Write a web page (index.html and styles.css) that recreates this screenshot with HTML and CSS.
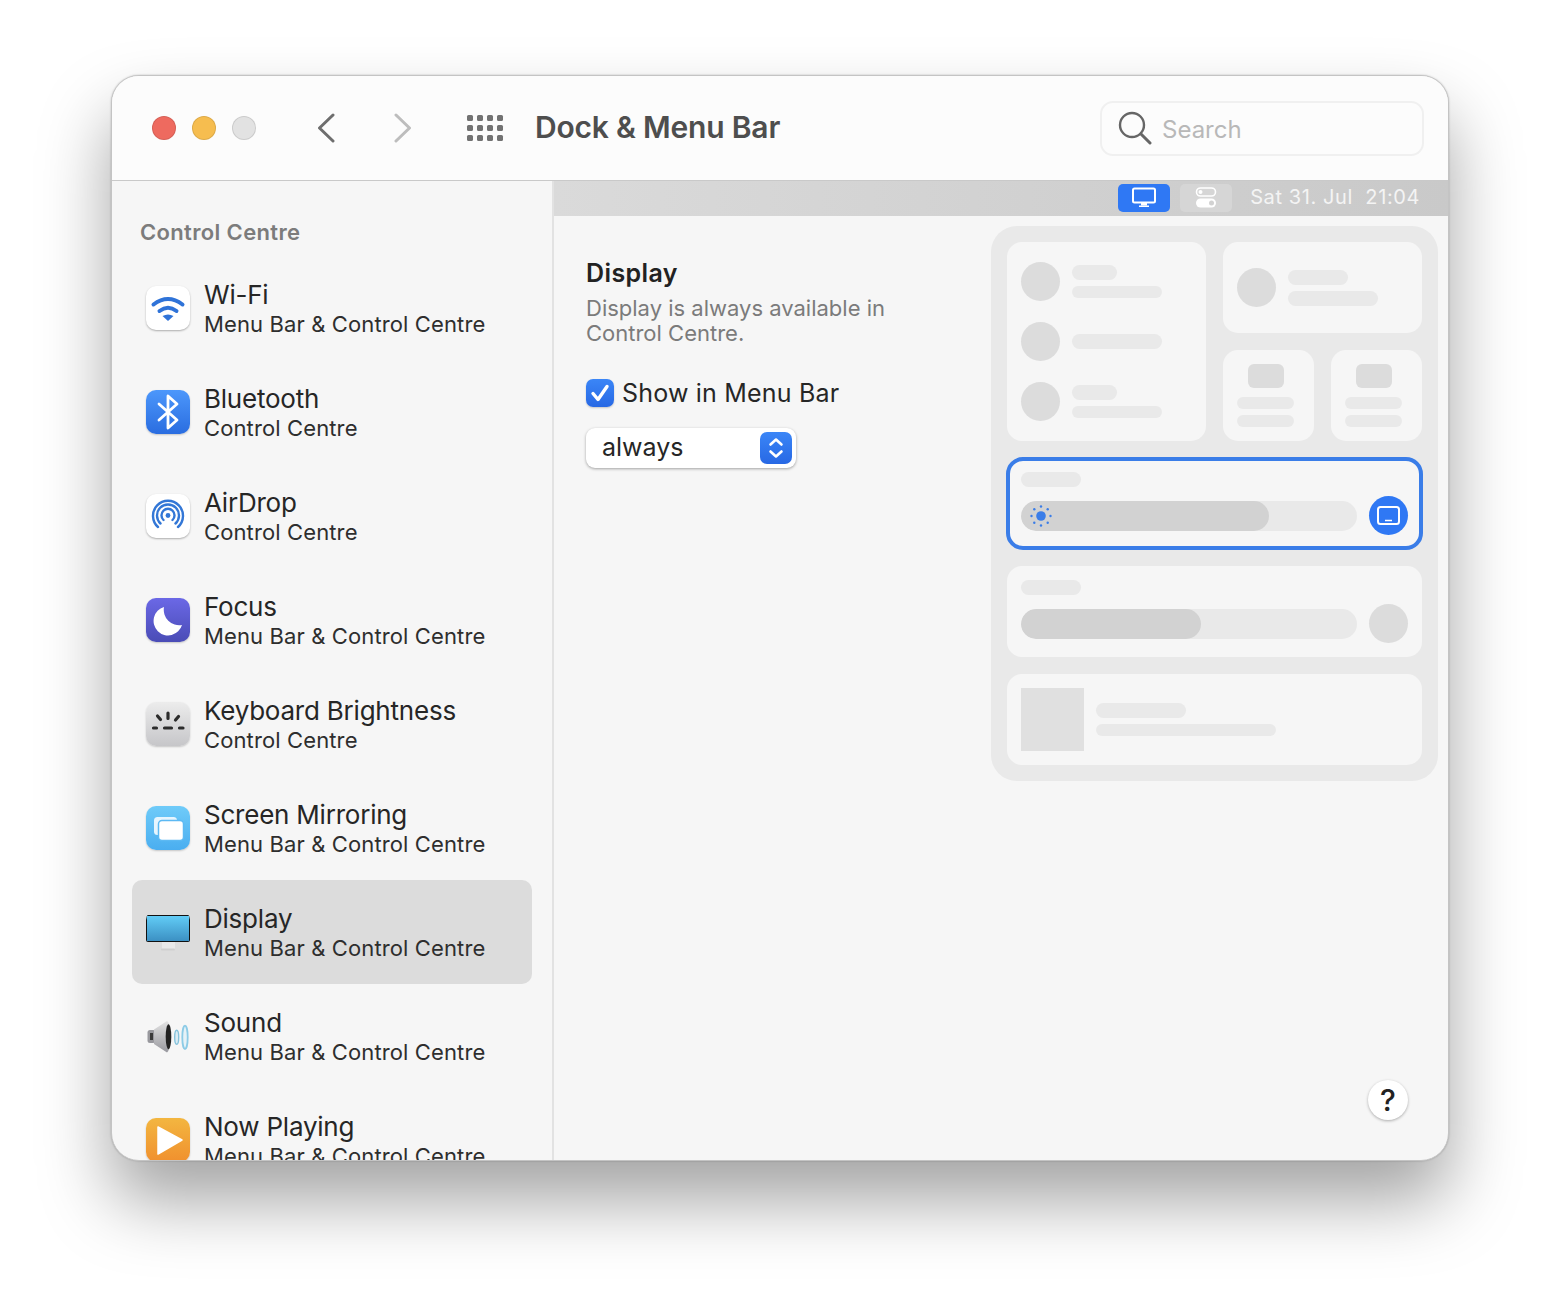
FILE: index.html
```html
<!DOCTYPE html>
<html lang="en">
<head>
    <meta charset="UTF-8">
    <meta name="viewport" content="width=device-width, initial-scale=1.0">
    <title>Dock &amp; Menu Bar</title>
    <link rel="stylesheet" href="styles.css">
</head>
<body>
<div class="window">
    <!-- title bar -->
    <header class="titlebar">
        <div class="lights">
            <span class="light red"></span>
            <span class="light yellow"></span>
            <span class="light grey"></span>
        </div>
        <svg class="chev" width="18" height="30" viewBox="0 0 18 30"><path d="M16 2 L2.500 15 L16 28" fill="none" stroke="#6e6e6e" stroke-width="3" stroke-linecap="round" stroke-linejoin="round"/></svg>
        <svg class="chev next" width="18" height="30" viewBox="0 0 18 30"><path d="M2 2 L15.500 15 L2 28" fill="none" stroke="#bdbdbd" stroke-width="3" stroke-linecap="round" stroke-linejoin="round"/></svg>
        <div class="apps">
            <i></i><i></i><i></i><i></i>
            <i></i><i></i><i></i><i></i>
            <i></i><i></i><i></i><i></i>
        </div>
        <h1 class="title">Dock &amp; Menu Bar</h1>
        <div class="search">
            <svg width="34" height="34" viewBox="0 0 34 34"><circle cx="14" cy="14" r="12" fill="none" stroke="#666" stroke-width="2.400"/><path d="M23 23 L32 32" stroke="#666" stroke-width="3" stroke-linecap="round"/></svg>
            <span class="search-text">Search</span>
        </div>
    </header>

    <div class="body">
        <!-- left list -->
        <aside class="sidebar">
            <div class="side-head">Control Centre</div>

            <div class="item">
                <div class="tile white">
                    <svg viewBox="0 0 44 44"><path d="M7.500 18.500 Q22 7.500 36.500 18.500" fill="none" stroke="#2f73d8" stroke-width="4" stroke-linecap="round"/><path d="M13.500 25 Q22 18.500 30.500 25" fill="none" stroke="#2f73d8" stroke-width="4" stroke-linecap="round"/><path d="M16.500 30 Q22 27 27.500 30 L22 35 Z" fill="#2f73d8"/></svg>
                </div>
                <div class="txt"><div class="name">Wi-Fi</div><div class="sub">Menu Bar &amp; Control Centre</div></div>
            </div>

            <div class="item">
                <div class="tile blue">
                    <svg viewBox="0 0 44 44"><path d="M13 14 L31 30 L22 38 L22 6 L31 14 L13 30" fill="none" stroke="#fff" stroke-width="2.800" stroke-linejoin="round" stroke-linecap="round"/></svg>
                </div>
                <div class="txt"><div class="name">Bluetooth</div><div class="sub">Control Centre</div></div>
            </div>

            <div class="item">
                <div class="tile white">
                    <svg viewBox="0 0 44 44" fill="none" stroke="#3377d6"><path d="M12 33 A15 15 0 1 1 32 33" stroke-width="2.400" stroke-linecap="round"/><path d="M14.500 29.500 A11 11 0 1 1 29.500 29.500" stroke-width="2.400" stroke-linecap="round"/><path d="M17.500 26 A6.500 6.500 0 1 1 26.500 26" stroke-width="2.400" stroke-linecap="round"/><circle cx="22" cy="21.500" r="2.400" fill="#3377d6" stroke="none"/></svg>
                </div>
                <div class="txt"><div class="name">AirDrop</div><div class="sub">Control Centre</div></div>
            </div>

            <div class="item">
                <div class="tile purple">
                    <svg viewBox="0 0 44 44"><path d="M18 9 A14.500 14.500 0 1 0 36 27 A15.500 15.500 0 0 1 18 9 Z" fill="#fff"/></svg>
                </div>
                <div class="txt"><div class="name">Focus</div><div class="sub">Menu Bar &amp; Control Centre</div></div>
            </div>

            <div class="item">
                <div class="tile silver">
                    <svg viewBox="0 0 44 44" stroke="#2c2c2c" stroke-width="3.200" stroke-linecap="round"><path d="M7.500 26 H10.500 M18.500 26 H25.500 M33.500 26 H37 M22 11 V16.500 M11.500 14 L14.500 17.500 M32.500 14.500 L29.500 18"/></svg>
                </div>
                <div class="txt"><div class="name">Keyboard Brightness</div><div class="sub">Control Centre</div></div>
            </div>

            <div class="item">
                <div class="tile sky">
                    <svg viewBox="0 0 44 44"><rect x="8" y="11" width="23" height="18" rx="3.500" fill="#e6f5fe"/><rect x="12.500" y="14.500" width="25" height="20" rx="3.500" fill="#fff" stroke="#5cb9f3" stroke-width="1.500"/></svg>
                </div>
                <div class="txt"><div class="name">Screen Mirroring</div><div class="sub">Menu Bar &amp; Control Centre</div></div>
            </div>

            <div class="item active">
                <div class="tile plain">
                    <svg viewBox="0 0 44 44"><defs><linearGradient id="scr" x1="0" y1="0" x2="0" y2="1"><stop offset="0" stop-color="#62cdf7"/><stop offset="1" stop-color="#3b8fc2"/></linearGradient></defs><rect x="16" y="31" width="13" height="9" fill="#e9e9e9"/><rect x="15" y="38.500" width="14" height="2" rx="1" fill="#cfcfcf"/><rect x="0.500" y="5.500" width="43" height="26" rx="1" fill="url(#scr)" stroke="#111"/></svg>
                </div>
                <div class="txt"><div class="name">Display</div><div class="sub">Menu Bar &amp; Control Centre</div></div>
            </div>

            <div class="item">
                <div class="tile plain">
                    <svg viewBox="0 0 44 44"><defs><linearGradient id="cone" x1="0" y1="0" x2="0" y2="1"><stop offset="0" stop-color="#e4e4e4"/><stop offset="1" stop-color="#98989e"/></linearGradient></defs><rect x="1.500" y="16" width="8" height="13" rx="2.500" fill="#98989d"/><rect x="4" y="19" width="3" height="7" fill="#3a3a3a"/><path d="M8 15.500 L21 7 Q24 8 24 22 Q24 37 21 38.500 L8 30 Z" fill="url(#cone)"/><ellipse cx="22.500" cy="22.700" rx="2.800" ry="12.500" fill="#222"/><ellipse cx="30.700" cy="23.300" rx="2" ry="7" fill="#dcedf5" stroke="#84c2dc" stroke-width="1.400"/><ellipse cx="39" cy="23.300" rx="2.700" ry="11.700" fill="#e6f2f7" stroke="#8ccbe6" stroke-width="1.800"/></svg>
                </div>
                <div class="txt"><div class="name">Sound</div><div class="sub">Menu Bar &amp; Control Centre</div></div>
            </div>

            <div class="item">
                <div class="tile orange">
                    <svg viewBox="0 0 44 44"><path d="M12 9 L36 22 L12 36 Z" fill="#fff" stroke="#fff" stroke-width="1.500" stroke-linejoin="round"/></svg>
                </div>
                <div class="txt"><div class="name">Now Playing</div><div class="sub">Menu Bar &amp; Control Centre</div></div>
            </div>
        </aside>

        <!-- right side -->
        <main class="main">
            <div class="menubar">
                <span class="mb-btn on">
                    <svg width="26" height="22" viewBox="0 0 26 22"><rect x="2" y="1.500" width="22" height="14" rx="1.500" fill="none" stroke="#fff" stroke-width="2"/><rect x="10" y="15.500" width="6" height="3" fill="#fff"/><rect x="8" y="18.500" width="10" height="1.500" fill="#fff"/></svg>
                </span>
                <span class="mb-btn off">
                    <svg width="22" height="22" viewBox="0 0 22 22"><rect x="1.500" y="1" width="19" height="8" rx="4" fill="none" stroke="#fff" stroke-width="1.600"/><circle cx="5.500" cy="5" r="2" fill="#fff"/><rect x="1" y="11.500" width="20" height="9" rx="4.500" fill="#fff"/><circle cx="16.500" cy="16" r="2.500" fill="#d2d2d2"/></svg>
                </span>
                <span class="clock">Sat 31. Jul&nbsp; 21:04</span>
            </div>

            <div class="content">
                <section class="opts">
                    <h2 class="opt-title">Display</h2>
                    <p class="opt-desc">Display is always available in Control Centre.</p>
                    <div class="check-row">
                        <span class="check">
                            <svg width="28" height="28" viewBox="0 0 28 28"><path d="M7 14.500 L12 20.500 L21 7.500" fill="none" stroke="#fff" stroke-width="3.400" stroke-linecap="round" stroke-linejoin="round"/></svg>
                        </span>
                        <span class="check-label">Show in Menu Bar</span>
                    </div>
                    <div class="select">
                        <span class="select-text">always</span>
                        <span class="stepper">
                            <svg width="32" height="32" viewBox="0 0 32 32"><path d="M10.500 12.500 L16 7.500 L21.500 12.500 M10.500 19.500 L16 24.500 L21.500 19.500" fill="none" stroke="#fff" stroke-width="2.600" stroke-linecap="round" stroke-linejoin="round"/></svg>
                        </span>
                    </div>
                </section>

                <section class="preview">
                    <div class="top-cards">
                        <div class="card net">
                            <div class="net-row">
                                <span class="dot"></span>
                                <div class="pills"><span class="pill w45"></span><span class="pill thin w90"></span></div>
                            </div>
                            <div class="net-row">
                                <span class="dot"></span>
                                <div class="pills"><span class="pill w90"></span></div>
                            </div>
                            <div class="net-row">
                                <span class="dot"></span>
                                <div class="pills"><span class="pill w45"></span><span class="pill thin w90"></span></div>
                            </div>
                        </div>
                        <div class="side-cards">
                            <div class="card wide">
                                <span class="dot"></span>
                                <div class="pills"><span class="pill w60"></span><span class="pill w90"></span></div>
                            </div>
                            <div class="small-row">
                                <div class="card small"><span class="sq"></span><span class="pill thin w57"></span><span class="pill thin w57"></span></div>
                                <div class="card small"><span class="sq"></span><span class="pill thin w57"></span><span class="pill thin w57"></span></div>
                            </div>
                        </div>
                    </div>

                    <div class="card slider-card picked">
                        <span class="pill w60"></span>
                        <div class="slider-row">
                            <div class="slider">
                                <div class="fill" style="width: 248px">
                                    <svg width="22" height="22" viewBox="0 0 22 22"><circle cx="11" cy="11" r="4.800" fill="#3a7de8"/><g fill="#3a7de8"><circle cx="11" cy="1.500" r="1.200"/><circle cx="11" cy="20.500" r="1.200"/><circle cx="1.500" cy="11" r="1.200"/><circle cx="20.500" cy="11" r="1.200"/><circle cx="4.300" cy="4.300" r="1.200"/><circle cx="17.700" cy="4.300" r="1.200"/><circle cx="4.300" cy="17.700" r="1.200"/><circle cx="17.700" cy="17.700" r="1.200"/></g></svg>
                                </div>
                            </div>
                            <span class="dot on">
                                <svg width="25" height="21" viewBox="0 0 25 21"><rect x="2" y="2" width="21" height="17" rx="2.500" fill="none" stroke="#fff" stroke-width="2"/><path d="M9 15.500 H16" stroke="#fff" stroke-width="1.500"/></svg>
                            </span>
                        </div>
                    </div>

                    <div class="card slider-card">
                        <span class="pill w60"></span>
                        <div class="slider-row">
                            <div class="slider"><div class="fill" style="width: 180px"></div></div>
                            <span class="dot"></span>
                        </div>
                    </div>

                    <div class="card playing">
                        <span class="art"></span>
                        <div class="pills"><span class="pill w90"></span><span class="pill thin w180"></span></div>
                    </div>
                </section>
            </div>
            <button class="help">?</button>
        </main>
    </div>
</div>
</body>
</html>
```

FILE: styles.css
```css
*{
    box-sizing: border-box;
}
html,body{
    margin: 0;
    height: 100%;
    background: #fff;
    overflow: hidden;
}
body{
    padding: 75px 111px 0;
    font-family: Inter, "Liberation Sans", sans-serif;
    color: #262626;
}
.window{
    width: 1338px;
    height: 1086px;
    background: #f6f6f6;
    border: 1px solid #c4c4c4;
    border-radius: 28px;
    overflow: hidden;
    box-shadow: 0 40px 70px rgba(0,0,0,.36), 0 0 2px rgba(0,0,0,.25);
    display: flex;
    flex-direction: column;
}

/* title bar */
.titlebar{
    height: 105px;
    flex: none;
    background: #fcfcfc;
    border-bottom: 1px solid #c9c9c9;
    display: flex;
    align-items: center;
    padding: 0 24px 0 40px;
}
.lights{
    display: flex;
    gap: 16px;
}
.light{
    width: 24px;
    height: 24px;
    border-radius: 50%;
    border: 1px solid rgba(0,0,0,.1);
}
.red{ background: #ee6a5f; }
.yellow{ background: #f6bd4f; }
.grey{ background: #e2e2e2; }
.chev{
    margin-left: 61px;
}
.chev.next{
    margin-left: 59px;
}
.apps{
    display: grid;
    grid-template-columns: repeat(4, 6px);
    grid-template-rows: repeat(3, 6px);
    gap: 4px;
    margin-left: 55px;
}
.apps i{
    background: #727272;
    border-radius: 1.500px;
}
.title{
    margin: 0 0 0 32px;
    padding-bottom: 2px;
    font-size: 30px;
    font-weight: 600;
    color: #4e4e4e;
    letter-spacing: -0.2px;
}
.search{
    margin-left: auto;
    width: 324px;
    height: 55px;
    border: 2px solid #f0f0f0;
    border-radius: 13px;
    display: flex;
    align-items: center;
    gap: 10px;
    padding-left: 16px;
    font-size: 24px;
    color: #b8b8b8;
}
.search-text{
    padding-top: 2px;
}

/* left list */
.body{
    flex: 1;
    display: flex;
    min-height: 0;
}
.sidebar{
    width: 442px;
    flex: none;
    border-right: 2px solid #e2e2e2;
    padding: 0 20px;
    overflow: hidden;
}
.side-head{
    height: 75px;
    padding: 38px 0 0 8px;
    font-size: 22px;
    font-weight: 600;
    color: #7c7c7c;
    line-height: 26px;
    letter-spacing: .35px;
}
.item{
    height: 104px;
    border-radius: 10px;
    display: flex;
    align-items: center;
    gap: 14px;
    padding-left: 14px;
}
.item.active{
    background: #dcdcdc;
}
.tile{
    width: 44px;
    height: 44px;
    flex: none;
    border-radius: 10px;
    overflow: hidden;
}
.tile svg{
    display: block;
    width: 44px;
    height: 44px;
}
.tile.white{
    background: #fff;
    box-shadow: 0 1px 2px rgba(0,0,0,.3);
}
.tile.blue{
    background: linear-gradient(#4c97fb, #2a6de0);
    box-shadow: 0 1px 2px rgba(0,0,0,.2);
}
.tile.purple{
    background: linear-gradient(#6b68e6, #4a4cb6);
    box-shadow: 0 1px 2px rgba(0,0,0,.2);
}
.tile.silver{
    background: linear-gradient(#ececec, #c6c6c9);
    box-shadow: 0 1px 2px rgba(0,0,0,.2);
}
.tile.sky{
    background: linear-gradient(#6fcbf9, #4aaef0);
    box-shadow: 0 1px 2px rgba(0,0,0,.2);
}
.tile.orange{
    background: linear-gradient(#f3b640, #f0902e);
    box-shadow: 0 1px 2px rgba(0,0,0,.2);
}
.txt{
    padding-top: 3px;
}
.name{
    font-size: 26px;
    line-height: 30px;
    letter-spacing: -0.22px;
    color: #262626;
}
.sub{
    font-size: 22px;
    line-height: 29px;
    letter-spacing: .12px;
    color: #2e2e2e;
}

/* right side */
.main{
    flex: 1;
    position: relative;
    min-width: 0;
    display: flex;
    flex-direction: column;
}
.menubar{
    height: 35px;
    flex: none;
    background: linear-gradient(90deg, #dadada, #c9c9c9);
    display: flex;
    align-items: center;
    justify-content: flex-end;
    padding: 0 28px 1px 0;
}
.mb-btn{
    width: 52px;
    height: 28px;
    border-radius: 5px;
    display: flex;
    align-items: center;
    justify-content: center;
    margin-right: 10px;
}
.mb-btn.on{
    background: #2f78f4;
}
.mb-btn.off{
    background: #d6d6d6;
}
.clock{
    margin-left: 8px;
    color: #f4f4f4;
    font-size: 20px;
    letter-spacing: .6px;
    padding-bottom: 3px;
}
.content{
    flex: 1;
    display: flex;
    justify-content: space-between;
    padding: 10px 10px 0 32px;
}
.opts{
    width: 330px;
}
.opt-title{
    margin: 29px 0 0;
    font-size: 25px;
    line-height: 36px;
    font-weight: 600;
    letter-spacing: .4px;
    color: #222;
}
.opt-desc{
    margin: 5px 0 0;
    font-size: 22px;
    line-height: 25px;
    color: #7b7b7b;
}
.check-row{
    display: flex;
    align-items: center;
    gap: 8px;
    margin-top: 32px;
}
.check{
    width: 28px;
    height: 28px;
    border-radius: 7px;
    background: linear-gradient(#3b86f7, #2768e4);
    box-shadow: 0 1px 2px rgba(0,0,0,.2);
}
.check svg{
    display: block;
}
.check-label{
    font-size: 25px;
    letter-spacing: .2px;
    color: #262626;
}
.select{
    width: 210px;
    height: 40px;
    margin-top: 20px;
    border-radius: 9px;
    background: #fff;
    box-shadow: 0 1px 3px rgba(0,0,0,.35);
    display: flex;
    align-items: center;
    justify-content: space-between;
    padding: 0 4px 0 16px;
    font-size: 25px;
}
.select-text{
    padding-bottom: 2px;
}
.stepper{
    width: 32px;
    height: 32px;
    border-radius: 7px;
    background: linear-gradient(#3b86f7, #2768e4);
}
.stepper svg{
    display: block;
}

/* preview of control centre */
.preview{
    width: 447px;
    height: 555px;
    background: #e9e9e9;
    border-radius: 26px;
    padding: 16px;
    display: flex;
    flex-direction: column;
    gap: 17px;
}
.card{
    background: #f6f6f6;
    border-radius: 15px;
}
.top-cards{
    display: flex;
    gap: 17px;
}
.net{
    width: 199px;
    height: 199px;
    padding: 20px 14px;
    display: flex;
    flex-direction: column;
    gap: 21px;
}
.net-row{
    display: flex;
    align-items: center;
    gap: 12px;
}
.side-cards{
    width: 199px;
    display: flex;
    flex-direction: column;
    gap: 17px;
}
.wide{
    height: 91px;
    padding: 0 14px;
    display: flex;
    align-items: center;
    gap: 12px;
}
.small-row{
    display: flex;
    gap: 17px;
}
.small{
    width: 91px;
    height: 91px;
    padding: 14px 14px 0;
    display: flex;
    flex-direction: column;
    align-items: flex-start;
    gap: 6px;
}
.sq{
    width: 36px;
    height: 24px;
    border-radius: 6px;
    background: #dcdcdc;
    margin: 0 0 3px 11px;
}
.dot{
    width: 39px;
    height: 39px;
    border-radius: 50%;
    background: #dcdcdc;
    flex: none;
}
.dot.on{
    background: #2f78f4;
    display: flex;
    align-items: center;
    justify-content: center;
}
.pills{
    display: flex;
    flex-direction: column;
    gap: 6px;
}
.pill{
    display: block;
    height: 15px;
    border-radius: 8px;
    background: #e9e9e9;
}
.pill.thin{
    height: 12px;
}
.w45{ width: 45px; }
.w57{ width: 57px; }
.w60{ width: 60px; }
.w90{ width: 90px; }
.w180{ width: 180px; }
.slider-card{
    height: 91px;
    padding: 14px 14px 0;
}
.slider-card.picked{
    height: 93px;
    margin: -1px;
    padding: 11px;
    border: 4px solid #3a7de8;
    border-radius: 17px;
}
.slider-row{
    display: flex;
    align-items: center;
    gap: 12px;
    margin-top: 9px;
}
.slider{
    width: 336px;
    height: 30px;
    border-radius: 15px;
    background: #e9e9e9;
    overflow: hidden;
}
.fill{
    height: 30px;
    border-radius: 15px;
    background: #d2d2d2;
    padding: 4px 9px;
}
.fill svg{
    display: block;
}
.playing{
    height: 91px;
    padding: 0 14px;
    display: flex;
    align-items: center;
    gap: 12px;
}
.art{
    width: 63px;
    height: 63px;
    background: #e0e0e0;
}
.help{
    position: absolute;
    right: 40px;
    bottom: 40px;
    width: 40px;
    height: 40px;
    padding: 0;
    border: 0;
    border-radius: 50%;
    background: #fff;
    box-shadow: 0 1px 3px rgba(0,0,0,.3);
    font-family: Inter, "Liberation Sans", sans-serif;
    font-size: 30px;
    font-weight: 500;
    color: #222;
}
```
